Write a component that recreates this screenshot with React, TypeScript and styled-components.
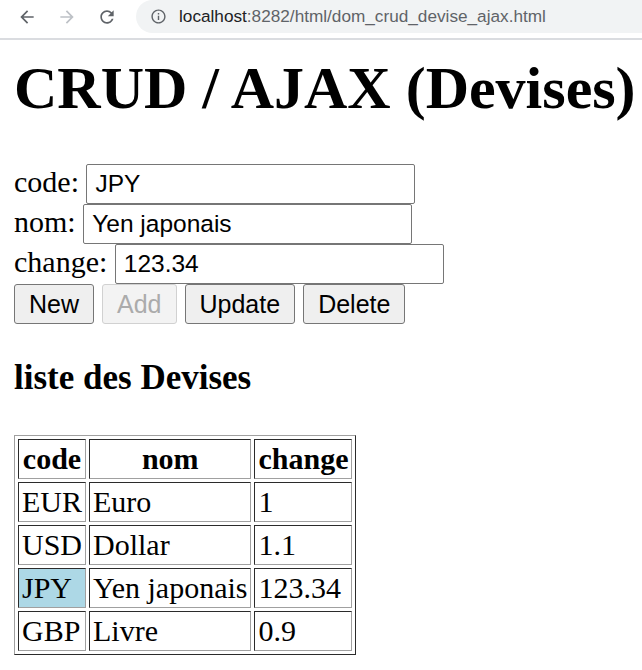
import React from "react";
import styled, { createGlobalStyle } from "styled-components";

const GlobalStyle = createGlobalStyle`
  html, body {
    margin: 0;
    padding: 0;
    background: #ffffff;
  }
  body {
    font-family: "Liberation Serif", "Times New Roman", serif;
    font-size: 30px;
    color: #000000;
  }
`;

const Browser = styled.div`
  width: 642px;
  min-height: 670px;
  overflow: hidden;
`;

const Toolbar = styled.div`
  display: flex;
  align-items: flex-start;
  height: 38px;
  border-bottom: 2px solid #dadce0;
  box-sizing: content-box;
  background: #ffffff;
`;

const NavButton = styled.div<{ $first?: boolean }>`
  width: 40px;
  height: 33px;
  display: flex;
  align-items: center;
  justify-content: center;
  margin-left: ${(p) => (p.$first ? "7px" : "0")};
  flex: none;
`;

const Omnibox = styled.div`
  flex: 1;
  margin-left: 9px;
  height: 33px;
  background: #f1f3f4;
  border-radius: 17px 0 0 17px;
  display: flex;
  align-items: center;
  padding-left: 14px;
  gap: 12px;
  font-family: "Liberation Sans", Arial, sans-serif;
  font-size: 17.2px;
  white-space: nowrap;
`;

const Host = styled.span`
  color: #202124;
`;

const Path = styled.span`
  color: #5f6368;
`;

const Page = styled.div`
  padding: 0 14px;
`;

const Title = styled.h1`
  margin: 15px 0 0;
  font-size: 60px;
  line-height: 66px;
  font-weight: bold;
  white-space: nowrap;
`;

const Form = styled.div`
  margin-top: 43px;
  display: flex;
  flex-direction: column;
`;

const Field = styled.div`
  display: flex;
  align-items: baseline;
  gap: 7.5px;
`;

const Label = styled.span`
  font-size: 30px;
  line-height: normal;
`;

const TextInput = styled.input`
  box-sizing: border-box;
  width: 329px;
  height: 40px;
  margin: 0;
  padding: 0 8px;
  border: 1px solid #767676;
  border-radius: 2px;
  background: #ffffff;
  color: #000000;
  font-family: "Liberation Sans", Arial, sans-serif;
  font-size: 24.5px;
  outline: none;
`;

const ButtonBar = styled.div`
  display: flex;
  gap: 8px;
`;

const Button = styled.button`
  box-sizing: border-box;
  height: 40px;
  margin: 0;
  padding: 0 14px;
  border: 1px solid #767676;
  border-radius: 3px;
  background: #efefef;
  color: #000000;
  font-family: "Liberation Sans", Arial, sans-serif;
  font-size: 25px;
  line-height: normal;

  &:disabled {
    background: #f3f3f3;
    border-color: #d1d1d1;
    color: #ababab;
  }
`;

const SectionTitle = styled.h3`
  margin: 34px 0 0;
  font-size: 35px;
  line-height: 40px;
  font-weight: bold;
`;

const Table = styled.table`
  margin-top: 37px;
  border-collapse: separate;
  border-spacing: 3px;
  border: 1px solid;
  border-color: #a0a0a0 #2b2b2b #2b2b2b #a0a0a0;
`;

const HeadCell = styled.th`
  padding: 2px 3px;
  border: 1px solid;
  border-color: #2b2b2b #a0a0a0 #a0a0a0 #2b2b2b;
  line-height: 34px;
  font-weight: bold;
  text-align: center;
`;

const Cell = styled.td<{ $selected?: boolean }>`
  padding: 2px 3px;
  border: 1px solid;
  border-color: #2b2b2b #a0a0a0 #a0a0a0 #2b2b2b;
  line-height: 34px;
  text-align: left;
  background: ${(p) => (p.$selected ? "#add8e6" : "transparent")};
`;

const BackIcon = ({ color }: { color: string }) => (
  <svg width="20" height="20" viewBox="0 0 24 24" fill={color}>
    <path d="M20 11H7.83l5.59-5.59L12 4l-8 8 8 8 1.41-1.41L7.83 13H20v-2z" />
  </svg>
);

const ForwardIcon = ({ color }: { color: string }) => (
  <svg width="20" height="20" viewBox="0 0 24 24" fill={color}>
    <path d="M4 11h12.17l-5.59-5.59L12 4l8 8-8 8-1.41-1.41L16.17 13H4v-2z" />
  </svg>
);

const ReloadIcon = ({ color }: { color: string }) => (
  <svg width="20" height="20" viewBox="0 0 24 24" fill={color}>
    <path d="M17.65 6.35C16.2 4.9 14.21 4 12 4c-4.42 0-7.99 3.58-7.99 8s3.57 8 7.99 8c3.730 0 6.84-2.55 7.73-6h-2.08c-.82 2.33-3.04 4-5.65 4-3.31 0-6-2.690-6-6s2.69-6 6-6c1.66 0 3.14.69 4.22 1.78L13 11h7V4l-2.35 2.35z" />
  </svg>
);

const InfoIcon = ({ color }: { color: string }) => (
  <svg width="17" height="17" viewBox="0 0 24 24" fill={color}>
    <path d="M11 7h2v2h-2zm0 4h2v6h-2zm1-9C6.48 2 2 6.48 2 12s4.48 10 10 10 10-4.48 10-10S17.52 2 12 2zm0 18c-4.41 0-8-3.59-8-8s3.59-8 8-8 8 3.59 8 8-3.59 8-8 8z" />
  </svg>
);

type Devise = { code: string; nom: string; change: string };

const devises: Devise[] = [
  { code: "EUR", nom: "Euro", change: "1" },
  { code: "USD", nom: "Dollar", change: "1.1" },
  { code: "JPY", nom: "Yen japonais", change: "123.34" },
  { code: "GBP", nom: "Livre", change: "0.9" },
];

export default function App() {
  const selected = "JPY";
  return (
    <Browser>
      <GlobalStyle />
      <Toolbar>
        <NavButton $first>
          <BackIcon color="#5f6368" />
        </NavButton>
        <NavButton>
          <ForwardIcon color="#bdc1c6" />
        </NavButton>
        <NavButton>
          <ReloadIcon color="#5f6368" />
        </NavButton>
        <Omnibox>
          <InfoIcon color="#5f6368" />
          <span>
            <Host>localhost</Host>
            <Path>:8282/html/dom_crud_devise_ajax.html</Path>
          </span>
        </Omnibox>
      </Toolbar>
      <Page>
        <Title>CRUD / AJAX (Devises)</Title>
        <Form>
          <Field>
            <Label>code:</Label>
            <TextInput defaultValue="JPY" />
          </Field>
          <Field>
            <Label>nom:</Label>
            <TextInput defaultValue="Yen japonais" />
          </Field>
          <Field>
            <Label>change:</Label>
            <TextInput defaultValue="123.34" />
          </Field>
          <ButtonBar>
            <Button>New</Button>
            <Button disabled>Add</Button>
            <Button>Update</Button>
            <Button>Delete</Button>
          </ButtonBar>
        </Form>
        <SectionTitle>liste des Devises</SectionTitle>
        <Table>
          <thead>
            <tr>
              <HeadCell>code</HeadCell>
              <HeadCell>nom</HeadCell>
              <HeadCell>change</HeadCell>
            </tr>
          </thead>
          <tbody>
            {devises.map((d) => (
              <tr key={d.code}>
                <Cell $selected={d.code === selected}>{d.code}</Cell>
                <Cell>{d.nom}</Cell>
                <Cell>{d.change}</Cell>
              </tr>
            ))}
          </tbody>
        </Table>
      </Page>
    </Browser>
  );
}
